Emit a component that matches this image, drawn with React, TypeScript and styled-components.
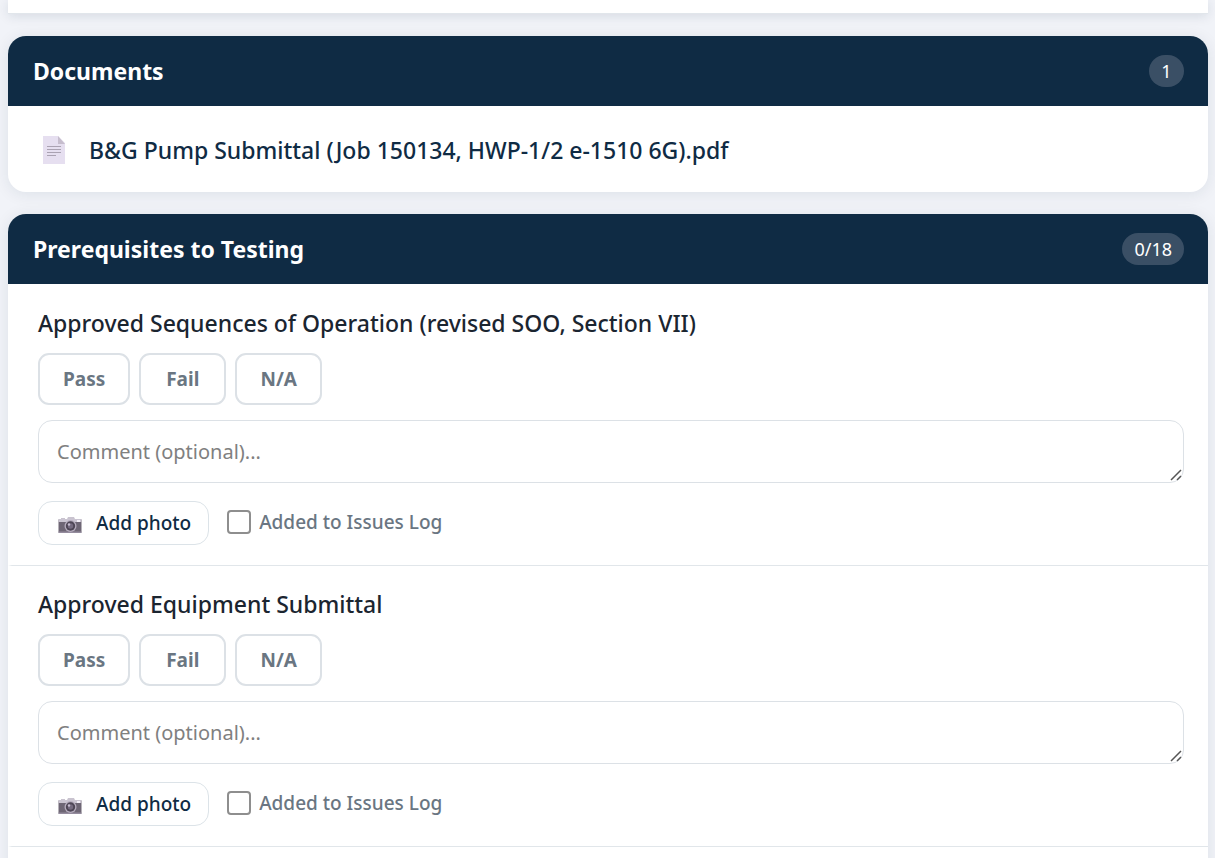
import React from "react";
import styled, { createGlobalStyle } from "styled-components";

const GlobalStyle = createGlobalStyle`
  *, *::before, *::after { box-sizing: border-box; }
  body {
    margin: 0;
    background: #f1f3f8;
    color: #1b2530;
    font-family: "Segoe UI", "Noto Sans", "Open Sans", sans-serif;
  }
  button, textarea, input { font-family: inherit; }
`;

const Page = styled.main`
  display: flex;
  flex-direction: column;
  gap: 22px;
  padding: 0 7px 0 8px;
  height: 100vh;
  overflow: hidden;
`;

const Card = styled.section`
  flex: none;
  overflow: hidden;
  background: #fff;
  border-radius: 18px;
  box-shadow: 0 2px 16px rgba(15, 43, 68, 0.09);
`;

const SummaryPanel = styled.div`
  flex: none;
  height: 14px;
  background: #fff;
  border-bottom: 1px solid #e1e6eb;
  box-shadow: 0 2px 12px rgba(15, 43, 68, 0.12);
`;

const CardHeader = styled.header`
  display: flex;
  align-items: center;
  justify-content: space-between;
  height: 70px;
  padding: 0 24px 0 25px;
  background: #0f2b44;
  color: #fff;
`;

const CardTitle = styled.h2`
  margin: 0;
  font-size: 23px;
  line-height: 32px;
  font-weight: 700;
`;

const Count = styled.span`
  min-width: 35px;
  padding: 0 12px;
  border-radius: 16px;
  background: #3a4f65;
  font-size: 18px;
  line-height: 32px;
  text-align: center;
`;

const DocumentLink = styled.a`
  display: flex;
  align-items: center;
  gap: 23px;
  height: 86px;
  padding: 2px 34px 0;
  color: #0f2b44;
  font-size: 23px;
  line-height: 32px;
  font-weight: 500;
  text-decoration: none;
`;

const CheckList = styled.div`
  padding-top: 1px;
`;

const CheckItem = styled.article`
  padding: 22px 24px 20px 26px;
  border-left: 4px solid transparent;
  border-bottom: 1px solid #e1e6ea;
`;

const ItemTitle = styled.h3`
  margin: 0 0 14px;
  font-size: 23px;
  line-height: 32px;
  font-weight: 500;
`;

const Choices = styled.div`
  display: flex;
  gap: 9px;
  margin-bottom: 15px;
`;

const ChoiceButton = styled.button`
  min-width: 87px;
  height: 52px;
  padding: 0 23px;
  border: 2px solid #dce1e6;
  border-radius: 11px;
  background: #fff;
  color: #6a7682;
  font-size: 19px;
  font-weight: 700;
`;

const CommentField = styled.div`
  position: relative;
  margin-bottom: 18px;
`;

const Comment = styled.textarea`
  display: block;
  width: 100%;
  height: 63px;
  padding: 16px 18px;
  border: 1px solid #dce1e6;
  border-radius: 14px;
  background: #fff;
  font-size: 20px;
  line-height: 30px;
  resize: vertical;
  overflow: hidden;
  &::placeholder { color: #808080; }
  &::-webkit-resizer { background: transparent; }
`;

const Grip = styled.svg`
  position: absolute;
  right: 2px;
  bottom: 2px;
  pointer-events: none;
`;

const Actions = styled.div`
  display: flex;
  align-items: center;
  gap: 18px;
`;

const PhotoButton = styled.button`
  display: flex;
  align-items: center;
  gap: 14px;
  height: 44px;
  padding: 0 17px 0 19px;
  border: 1px solid #dce3e8;
  border-radius: 14px;
  background: #fff;
  color: #0f2b44;
  font-size: 19px;
  font-weight: 500;
`;

const IssueLabel = styled.label`
  display: flex;
  align-items: center;
  gap: 8px;
  padding-bottom: 2px;
  color: #6a7682;
  font-size: 19px;
  line-height: 24px;
  font-weight: 500;
`;

const Tick = styled.input`
  appearance: none;
  width: 24px;
  height: 24px;
  margin: 0;
  border: 2px solid #8e8e8e;
  border-radius: 4px;
  background: #fff;
  &:checked { background: #0f2b44; }
`;

const PageIcon = () => (
  <svg width="24" height="28" viewBox="0 0 24 28" aria-hidden="true">
    <path d="M1 0h15l7 7v21H1z" fill="#e6dff0" />
    <path d="M16 0l7 8h-7z" fill="#c6bdcd" />
    <path d="M5 10.5h14M5 13.5h14M5 16.5h14M5 19.5h9" stroke="#aaa2b2" strokeWidth="1.2" />
  </svg>
);

const CameraIcon = () => (
  <svg width="24" height="24" viewBox="0 0 24 24" aria-hidden="true">
    <path d="M3 7h4v2H3zM9 8l1-2h6l1 2z" fill="#c9c3cf" />
    <rect x="0.5" y="8" width="23" height="14" rx="1" fill="#6e6675" />
    <path d="M1.500 8h21a1 1 0 0 1 1 1v2H.5V9a1 1 0 0 1 1-1z" fill="#cbc5d2" />
    <path d="M.5 20.500h23V22H.5z" fill="#958c9e" />
    <rect x="19" y="9" width="3" height="2" fill="#f4eff8" />
    <circle cx="12.500" cy="15" r="6" fill="#b5acbd" />
    <circle cx="12.500" cy="15" r="4.700" fill="#4e4656" />
    <circle cx="12.500" cy="15" r="2.700" fill="#756b80" />
    <circle cx="11" cy="13.500" r="1.200" fill="#c7bdd1" />
  </svg>
);

const choices = ["Pass", "Fail", "N/A"];
const items = [
  "Approved Sequences of Operation (revised SOO, Section VII)",
  "Approved Equipment Submittal",
];

function Prerequisite({ title }: { title: string }) {
  return (
    <CheckItem>
      <ItemTitle>{title}</ItemTitle>
      <Choices role="group" aria-label={title}>
        {choices.map((choice) => (
          <ChoiceButton key={choice} type="button">{choice}</ChoiceButton>
        ))}
      </Choices>
      <CommentField>
        <Comment rows={1} aria-label="Comment" placeholder="Comment (optional)..." />
        <Grip width="12" height="12" viewBox="0 0 12 12" aria-hidden="true">
          <path d="M1 11L11 1M7 11l4-4" stroke="#555" strokeWidth="1.500" />
        </Grip>
      </CommentField>
      <Actions>
        <PhotoButton type="button"><CameraIcon />Add photo</PhotoButton>
        <IssueLabel><Tick type="checkbox" />Added to Issues Log</IssueLabel>
      </Actions>
    </CheckItem>
  );
}

export default function App() {
  return (
    <>
      <GlobalStyle />
      <Page>
        <SummaryPanel />
        <Card>
          <CardHeader>
            <CardTitle>Documents</CardTitle>
            <Count>1</Count>
          </CardHeader>
          <DocumentLink href="#document">
            <PageIcon />
            B&amp;G Pump Submittal (Job 150134, HWP-1/2 e-1510 6G).pdf
          </DocumentLink>
        </Card>
        <Card>
          <CardHeader>
            <CardTitle>Prerequisites to Testing</CardTitle>
            <Count>0/18</Count>
          </CardHeader>
          <CheckList>
            {items.map((title) => <Prerequisite key={title} title={title} />)}
            <CheckItem />
          </CheckList>
        </Card>
      </Page>
    </>
  );
}
